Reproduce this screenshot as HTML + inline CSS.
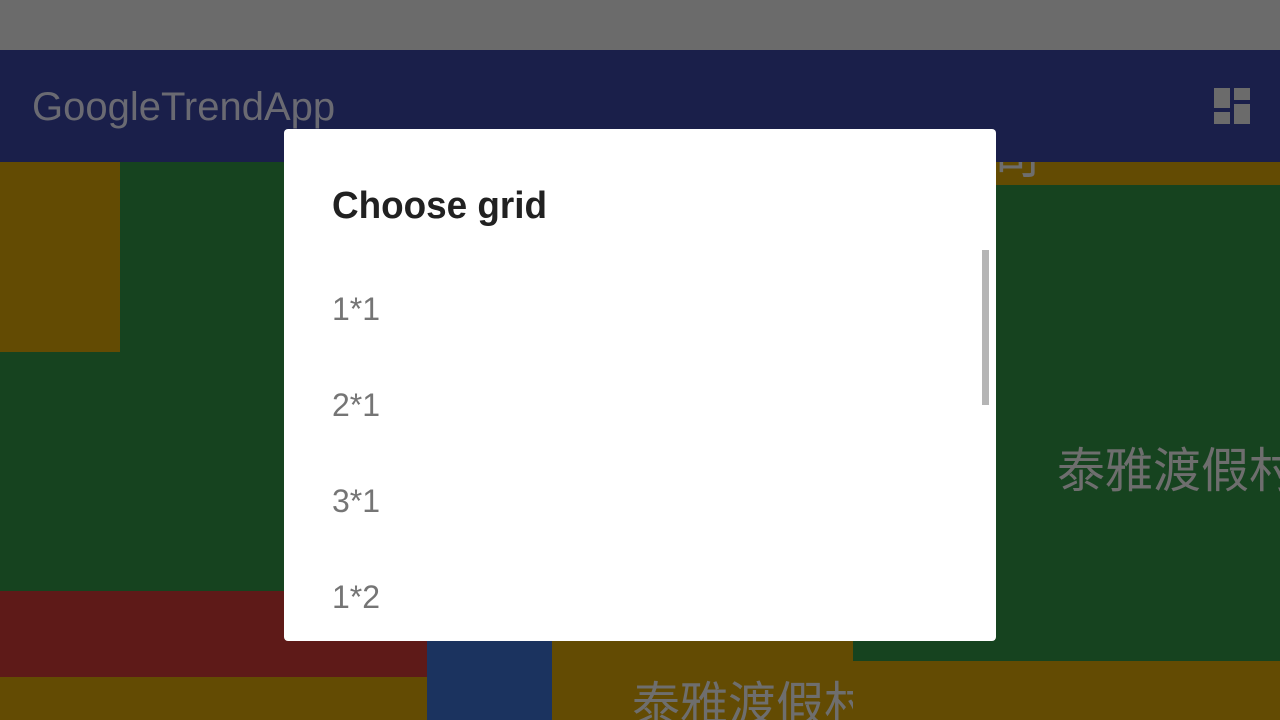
<!DOCTYPE html>
<html><head><meta charset="utf-8"><style>
body{margin:0;width:1280px;height:720px;position:relative;overflow:hidden;font-family:"Liberation Sans","Noto Sans CJK TC",sans-serif;background:#16431f}
.a{position:absolute}
.t{color:#6e6e6e;font-size:48px;white-space:nowrap;line-height:1}
.it{position:absolute;left:48px;font-size:32px;color:#757575;line-height:1}
</style></head><body>
<div class="a" style="left:0;top:0;width:1280px;height:50px;background:#6b6b6b"></div>
<div class="a" style="left:0;top:50px;width:1280px;height:112px;background:#1a1f4a"></div>
<div class="a t" style="left:32px;top:87px;font-size:40px;color:#6a6a72">GoogleTrendApp</div>
<div class="a" style="left:1214px;top:88px;width:16px;height:20px;background:#6b6b6b"></div>
<div class="a" style="left:1214px;top:112px;width:16px;height:12px;background:#6b6b6b"></div>
<div class="a" style="left:1234px;top:88px;width:16px;height:12px;background:#6b6b6b"></div>
<div class="a" style="left:1234px;top:104px;width:16px;height:20px;background:#6b6b6b"></div>
<div class="a" style="left:0;top:162px;width:120px;height:190px;background:#634b03"></div>
<div class="a" style="left:0;top:591px;width:427px;height:86px;background:#5e1a18"></div>
<div class="a" style="left:0;top:677px;width:427px;height:43px;background:#634b03"></div>
<div class="a" style="left:427px;top:600px;width:125px;height:120px;background:#1b335f"></div>
<div class="a" style="left:552px;top:600px;width:301px;height:120px;background:#634b03;overflow:hidden"><div class="a t" style="left:80px;top:82px">泰雅渡假村</div></div>
<div class="a" style="left:853px;top:661px;width:427px;height:59px;background:#634b03"></div>
<div class="a" style="left:900px;top:162px;width:380px;height:23px;background:#634b03;overflow:hidden"><div class="a t" style="left:-52px;top:-28px">假村公司</div></div>
<div class="a t" style="left:1057px;top:448px">泰雅渡假村</div>
<div class="a" style="left:284px;top:129px;width:712px;height:512px;background:#fff;border-radius:4px;overflow:hidden">
<div class="a" style="left:48px;top:58px;font-size:38px;font-weight:bold;color:#212121;line-height:1;transform:scaleX(0.97);transform-origin:left">Choose grid</div>
<div class="it" style="top:164px">1*1</div>
<div class="it" style="top:260px">2*1</div>
<div class="it" style="top:356px">3*1</div>
<div class="it" style="top:452px">1*2</div>
<div class="a" style="left:698px;top:121px;width:7px;height:155px;background:#b5b5b5"></div>
</div>
</body></html>
